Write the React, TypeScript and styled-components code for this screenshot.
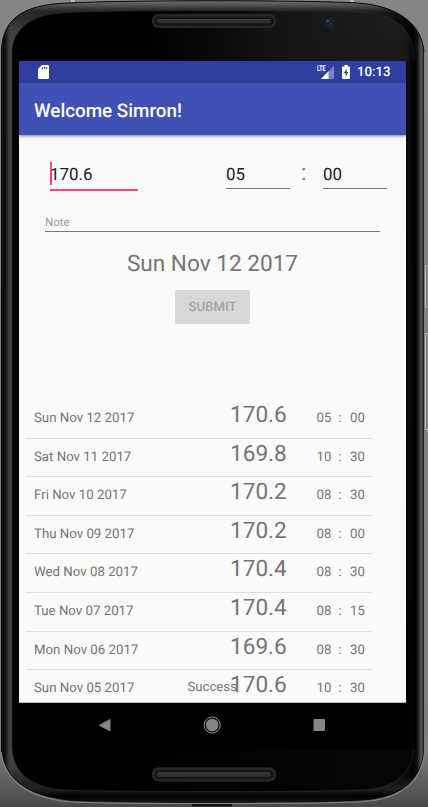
import React from 'react';
import styled, { createGlobalStyle } from 'styled-components';

const GlobalStyle = createGlobalStyle`
  * { box-sizing: border-box; }
  html, body { margin: 0; padding: 0; background: #828282; overflow: hidden; }
  body { font-family: Roboto, "Liberation Sans", sans-serif; text-rendering: geometricPrecision; }
`;

const Stage = styled.main`
  position: relative;
  width: 428px;
  height: 807px;
  padding: 61px 0 0 19px;
  overflow: hidden;
`;

const Artwork = styled.svg`
  position: absolute;
  inset: 0;
  display: block;
`;

const Screen = styled.div`
  position: relative;
  width: 387px;
  height: 688px;
  display: flex;
  flex-direction: column;
  overflow: hidden;
`;

const StatusBar = styled.div`
  flex: none;
  height: 22px;
  padding: 0 15px 0 19px;
  display: flex;
  align-items: center;
  background: #303f9f;
  color: #fff;
`;

const StatusIcons = styled.div`
  margin-left: auto;
  display: flex;
  align-items: center;
`;

const Clock = styled.time`
  width: 34px;
  margin-left: 7px;
  font-size: 13.2px;
  font-weight: 500;
  line-height: 22px;
  padding-top: 1px;
  white-space: nowrap;
`;

const AppBar = styled.header`
  flex: none;
  position: relative;
  z-index: 1;
  height: 52px;
  padding: 3px 0 0 15px;
  display: flex;
  align-items: center;
  background: #3f51b5;
  box-shadow: 0 1px 3px rgba(0, 0, 0, 0.5);
`;

const Title = styled.h1`
  margin: 0;
  color: #fff;
  font-size: 18.83px;
  font-weight: 500;
  line-height: 24px;
`;

const Content = styled.section`
  flex: none;
  position: relative;
  height: 568px;
  padding-top: 27px;
  background: #fafafa;
  border-bottom: 1px solid #b9bdbb;
  color: #757575;
  overflow: hidden;
`;

const EntryRow = styled.div`
  display: flex;
  height: 29px;
  padding-left: 31px;
`;

const Field = styled.div<{ $width: number; $gap?: number; $active?: boolean }>`
  position: relative;
  flex: none;
  width: ${p => p.$width}px;
  height: ${p => (p.$active ? 29 : 27)}px;
  margin-left: ${p => p.$gap ?? 0}px;
  border-bottom: ${p => (p.$active ? '2px solid #ff4081' : '1px solid #767676')};
  color: #212121;
  font-size: 16.95px;
  line-height: 26px;
`;

const Caret = styled.span`
  position: absolute;
  left: 0;
  top: 0;
  width: 2px;
  height: 23px;
  background: #ff4081;
`;

const FieldColon = styled.span`
  width: 33px;
  padding-left: 11px;
  font-size: 22.6px;
  line-height: 22px;
`;

const NoteField = styled.div`
  width: 335px;
  height: 17px;
  margin: 24px 0 0 26px;
  border-bottom: 1px solid #767676;
  color: #9b9b9b;
  font-size: 11.5px;
  line-height: 15px;
`;

const DateHeading = styled.h2`
  margin: 17px 0 0;
  text-align: center;
  font-size: 22.6px;
  font-weight: 400;
  line-height: 30px;
`;

const SubmitButton = styled.button`
  display: block;
  width: 75px;
  height: 34px;
  margin: 11px 0 0 156px;
  padding: 2px 0 0;
  border: 0;
  border-radius: 2px;
  background: #d6d7d7;
  color: #a4a5a5;
  font: 500 13.18px/32px Roboto, sans-serif;
  text-rendering: geometricPrecision;
`;

const History = styled.div`
  margin: 76px 0 0 7px;
  width: 346px;
`;

const HistoryRow = styled.div`
  display: flex;
  align-items: baseline;
  height: 38.6px;
  padding-left: 8px;
  border-bottom: 1px solid #dedede;
  line-height: 29px;
  white-space: nowrap;
`;

const DateLabel = styled.span`
  width: 196px;
  font-size: 13.25px;
`;

const Toast = styled.div`
  position: absolute;
  left: 168.5px;
  bottom: 5px;
  font-size: 13.18px;
  line-height: 18px;
`;

const Weight = styled.span`
  width: 86.5px;
  font-size: 22.6px;
`;

const TimePart = styled.span<{ $width: number }>`
  width: ${p => p.$width}px;
  font-size: 13.18px;
`;

const NavBar = styled.nav`
  flex: none;
  height: 46px;
  display: grid;
  grid-template-columns: 18px 18px 18px;
  column-gap: 89.5px;
  justify-content: center;
  align-items: center;
  padding: 0 1px 2px 0;
  background: #000;
`;

const rows = [
  ['Sun Nov 12 2017', '170.6', '05', '00'],
  ['Sat Nov 11 2017', '169.8', '10', '30'],
  ['Fri Nov 10 2017', '170.2', '08', '30'],
  ['Thu Nov 09 2017', '170.2', '08', '00'],
  ['Wed Nov 08 2017', '170.4', '08', '30'],
  ['Tue Nov 07 2017', '170.4', '08', '15'],
  ['Mon Nov 06 2017', '169.6', '08', '30'],
  ['Sun Nov 05 2017', '170.6', '10', '30'],
];

const OUTER =
  'M1.5 52 C2 14 30 4 70 3 C120 0 306 0 358 3 C398 6 422 24 424 52 V752 C420 786 395 798 360 800 C310 803 116 803 70 800 C31 796 6 782 1.5 752 Z';
const INNER =
  'M12 50 C14 28 32 15 60 13 C105 10 320 9 366 13 C397 16 410 29 413 50 V754 C410 777 392 788 362 790 C315 792 113 792 62 790 C32 786 14 775 12 748 Z';

function Speaker({ y }: { y: number }) {
  return (
    <g>
      <rect x="152" y={y} width="124" height="14" rx="6" fill="#1c1c1c" />
      <rect x="153" y={y + 1} width="122" height="12" rx="5.5" fill="none" stroke="#2c2c2c" strokeWidth="1.5" />
      <rect x="156" y={y + 4.5} width="116" height="5.5" rx="2.5" fill="#303030" stroke="#0c0c0c" />
      <path d={`M158 ${y + 5.5}H270`} stroke="#454545" strokeWidth="1" />
    </g>
  );
}

function PhoneArtwork() {
  return (
    <Artwork width="428" height="807" viewBox="0 0 428 807" aria-hidden="true">
      <defs>
        <linearGradient id="backdrop" x1="0" y1="0" x2="0" y2="1">
          <stop offset="0" stopColor="#858585" />
          <stop offset="0.93" stopColor="#7c7c7c" />
          <stop offset="1" stopColor="#484848" />
        </linearGradient>
        <linearGradient id="rim" gradientUnits="userSpaceOnUse" x1="1" y1="0" x2="424" y2="0">
          <stop offset="0" stopColor="#151515" />
          <stop offset="0.009" stopColor="#0c0e0e" />
          <stop offset="0.021" stopColor="#424242" />
          <stop offset="0.14" stopColor="#3a3a3a" />
          <stop offset="0.86" stopColor="#343434" />
          <stop offset="0.975" stopColor="#000" />
          <stop offset="0.985" stopColor="#151515" />
          <stop offset="0.993" stopColor="#555" />
          <stop offset="1" stopColor="#303030" />
        </linearGradient>
        <linearGradient id="topShade" gradientUnits="userSpaceOnUse" x1="0" y1="0" x2="0" y2="807">
          <stop offset="0" stopColor="#777" />
          <stop offset="0.008" stopColor="#484848" />
          <stop offset="0.016" stopColor="#101010" stopOpacity="0.5" />
          <stop offset="0.04" stopColor="#000" stopOpacity="0" />
          <stop offset="0.95" stopColor="#000" stopOpacity="0" />
          <stop offset="0.978" stopColor="#202020" />
          <stop offset="0.987" stopColor="#000" />
          <stop offset="1" stopColor="#333" />
        </linearGradient>
        <linearGradient id="glass" x1="0" y1="0" x2="1" y2="0">
          <stop offset="0" stopColor="#000" />
          <stop offset="0.34" stopColor="#000" />
          <stop offset="0.7" stopColor="#151616" />
          <stop offset="0.96" stopColor="#1b1d1d" />
          <stop offset="0.985" stopColor="#171919" />
          <stop offset="1" stopColor="#000" />
        </linearGradient>
        <linearGradient id="lowerGlass" x1="0" y1="0" x2="0" y2="1">
          <stop offset="0" stopColor="#000" stopOpacity="0" />
          <stop offset="0.5" stopColor="#000" stopOpacity="0.3" />
          <stop offset="0.85" stopColor="#000" stopOpacity="0.8" />
          <stop offset="1" stopColor="#000" stopOpacity="0.8" />
        </linearGradient>
      </defs>
      <rect width="428" height="807" fill="url(#backdrop)" />
      <path d="M71 1H75M350 1H354" stroke="#bbb" strokeWidth="2" />
      <path d="M192 805H232" stroke="#111" strokeWidth="3" />
      <path d={OUTER} fill="url(#rim)" />
      <path d={OUTER} fill="url(#topShade)" />
      <path d={OUTER} fill="none" stroke="#080808" strokeWidth="1" />
      <path d="M424.7 52V752C421 787 395 800 360 802C310 804 116 804 70 802C31 798 5 784 1 752" fill="none" stroke="#858585" strokeWidth="1.2" />
      <path d={INNER} fill="url(#glass)" />
      <path d={INNER} fill="url(#lowerGlass)" />
      <path d={INNER} fill="none" stroke="#292929" strokeWidth="1" opacity="0.7" />
      <path d="M414.5 60V750" stroke="#000" strokeWidth="4" />
      <path d="M428.5 266H425.5V307H428.5M428.5 333.5H425.5V429.5H428.5" fill="none" stroke="#bdbdbd" strokeWidth="1" />
      <Speaker y={14} />
      <Speaker y={767.5} />
      <circle cx="330" cy="22.5" r="5.7" fill="#202021" />
      <circle cx="329.5" cy="22.3" r="4" fill="#182033" />
      <circle cx="328" cy="21" r="1.2" fill="#385078" />
      <circle cx="331" cy="23.5" r="1.1" fill="#2d4267" />
      <path d="M18.5 703V749H407V61" fill="none" stroke="#000" />
      <rect x="19" y="703" width="388" height="46" fill="#000" />
    </Artwork>
  );
}

function StorageIcon() {
  return (
    <svg width="11" height="14" viewBox="0 0 11 14">
      <path d="M4 0H10Q11 0 11 1V13Q11 14 10 14H1Q0 14 0 13V4Z" fill="#fff" />
      <path d="M4.5 2V4.3M6.6 2V4.3M8.7 2V4.3" stroke="#303f9f" strokeWidth="1" />
    </svg>
  );
}

function SignalIcon() {
  return (
    <svg width="18" height="14" viewBox="0 0 18 14">
      <path d="M17 .7V14H4Z" fill="#7883c1" />
      <path d="M11.5 6.3V14H4Z" fill="#fff" />
      <text x="0" y="6.3" fill="#fff" fontFamily="Roboto, sans-serif" fontWeight="700" fontSize="8" textLength="8.5" lengthAdjust="spacingAndGlyphs">LTE</text>
    </svg>
  );
}

function BatteryIcon() {
  return (
    <svg width="8" height="14" viewBox="0 0 8 14">
      <path d="M2.4 0H5.6V1.4H7Q8 1.4 8 2.4V13Q8 14 7 14H1Q0 14 0 13V2.4Q0 1.4 1 1.4H2.4Z" fill="#fff" />
      <path d="M4.7 3.5 1.8 8.2H3.6V12L6.3 7H4.7Z" fill="#303f9f" />
    </svg>
  );
}

const IconGap = styled.span`
  width: 7px;
`;

export default function App() {
  return (
    <>
      <GlobalStyle />
      <Stage>
        <PhoneArtwork />
        <Screen>
          <StatusBar>
            <StorageIcon />
            <StatusIcons>
              <SignalIcon />
              <IconGap />
              <BatteryIcon />
              <Clock>10:13</Clock>
            </StatusIcons>
          </StatusBar>
          <AppBar>
            <Title>Welcome Simron!</Title>
          </AppBar>
          <Content>
            <EntryRow>
              <Field $width={88} $active>
                <Caret />
                170.6
              </Field>
              <Field $width={64} $gap={88}>05</Field>
              <FieldColon>:</FieldColon>
              <Field $width={64}>00</Field>
            </EntryRow>
            <NoteField>Note</NoteField>
            <DateHeading>Sun Nov 12 2017</DateHeading>
            <SubmitButton disabled>SUBMIT</SubmitButton>
            <History>
              {rows.map(([date, weight, hour, minute]) => (
                <HistoryRow key={date}>
                  <DateLabel>{date}</DateLabel>
                  <Weight>{weight}</Weight>
                  <TimePart $width={22}>{hour}</TimePart>
                  <TimePart $width={11.5}>:</TimePart>
                  <TimePart $width={18}>{minute}</TimePart>
                </HistoryRow>
              ))}
            </History>
            <Toast role="status">Success</Toast>
          </Content>
          <NavBar>
            <svg width="18" height="18" viewBox="0 0 18 18">
              <path d="M14 3.5V15L3.5 9.3Z" fill="#858585" stroke="#858585" strokeWidth="1" strokeLinejoin="round" />
            </svg>
            <svg width="18" height="18" viewBox="0 0 18 18">
              <circle cx="9.2" cy="9" r="8" fill="none" stroke="#999" strokeWidth="1" />
              <circle cx="9.2" cy="9" r="6.3" fill="#858585" />
            </svg>
            <svg width="18" height="18" viewBox="0 0 18 18">
              <rect x="2.5" y="3" width="11.5" height="12" rx="1" fill="#858585" />
            </svg>
          </NavBar>
        </Screen>
      </Stage>
    </>
  );
}
